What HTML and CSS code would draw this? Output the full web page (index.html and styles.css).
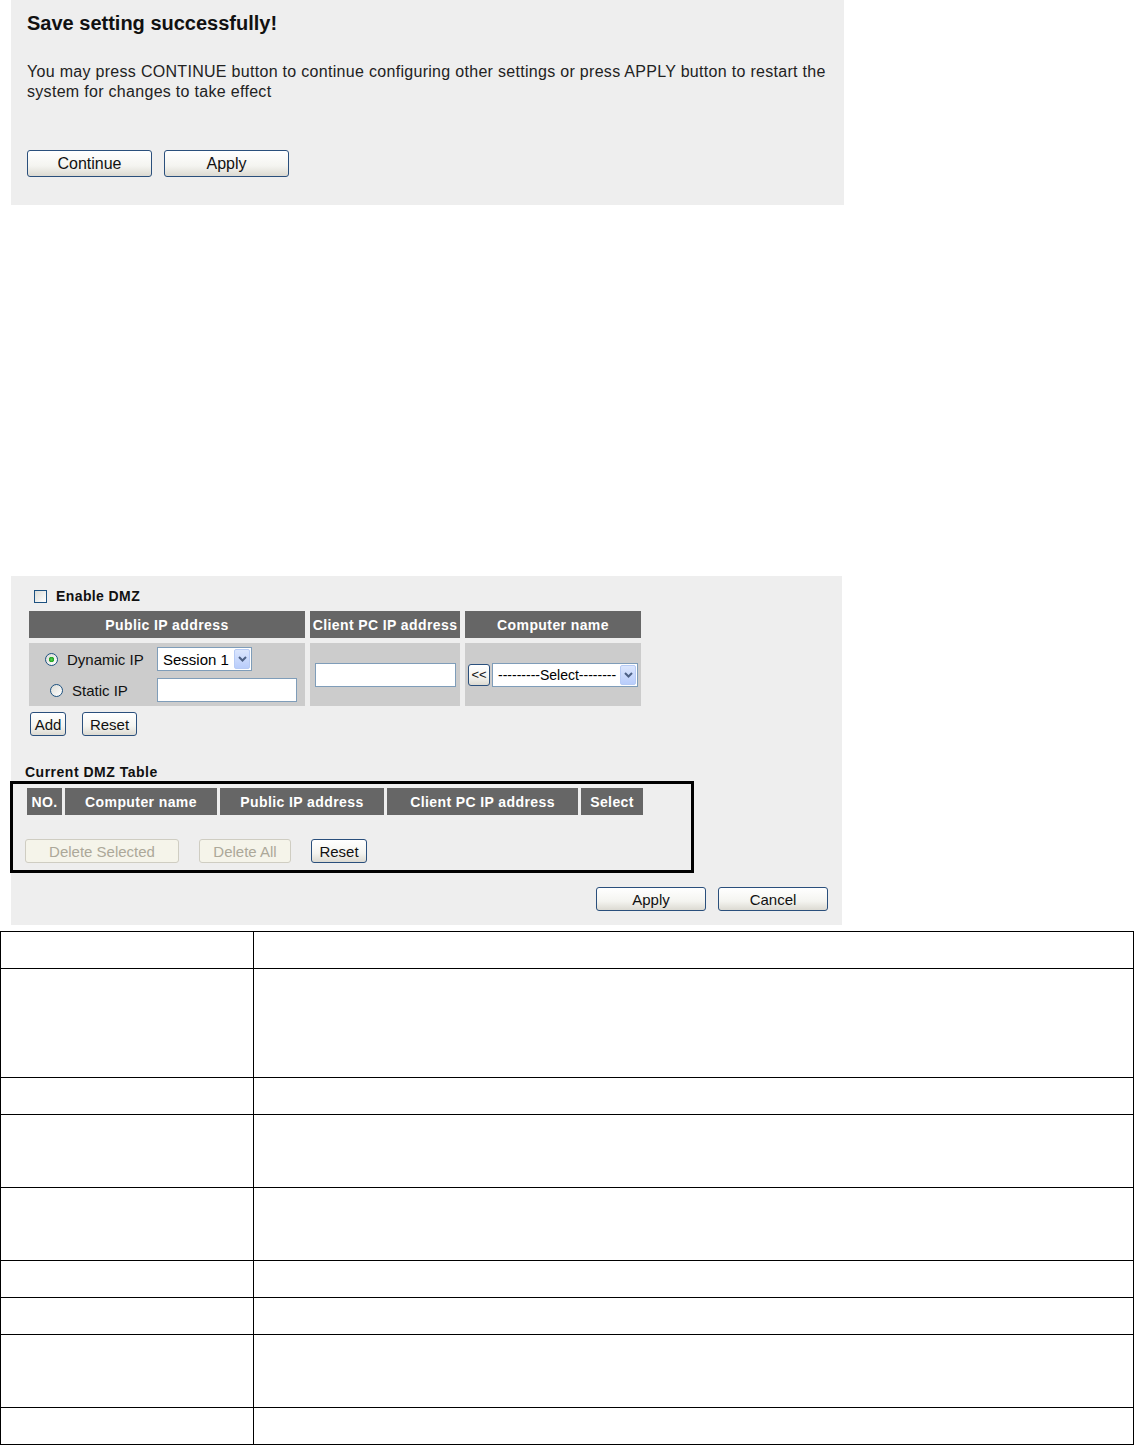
FILE: index.html
```html
<!DOCTYPE html>
<html lang="en">
  <head>
    <meta charset="UTF-8" />
    <meta name="viewport" content="width=device-width, initial-scale=1.0" />
    <title>DMZ Settings</title>
    <link rel="stylesheet" href="styles.css">
  </head>
  <body>
    <div class="panel save-panel">
      <h2 class="save-title">Save setting successfully!</h2>
      <p class="save-text">You may press CONTINUE button to continue configuring other settings or press APPLY button to restart the<br>system for changes to take effect</p>
      <div class="save-buttons">
        <button class="btn btn-big">Continue</button>
        <button class="btn btn-big">Apply</button>
      </div>
    </div>

    <div class="panel dmz-panel">
      <label class="enable-row"><input type="checkbox" class="checkbox">Enable DMZ</label>

      <div class="dmz-grid">
        <div class="head">Public IP address</div>
        <div class="head">Client PC IP address</div>
        <div class="head">Computer name</div>

        <div class="cell public-cell">
          <label class="radio-label"><input type="radio" name="iptype" class="radio" checked>Dynamic IP</label>
          <div class="select session-select">
            <span class="select-text">Session 1</span>
            <span class="select-arrow"><svg width="9" height="6" viewBox="0 0 9 6"><path d="M1 1 L4.5 4.5 L8 1" fill="none" stroke="#4d6185" stroke-width="2"/></svg></span>
          </div>
          <label class="radio-label radio-static"><input type="radio" name="iptype" class="radio">Static IP</label>
          <input type="text" class="text-input static-input">
        </div>

        <div class="cell client-cell">
          <input type="text" class="text-input client-input">
        </div>

        <div class="cell name-cell">
          <button class="btn btn-copy">&lt;&lt;</button>
          <div class="select name-select">
            <span class="select-text">---------Select--------</span>
            <span class="select-arrow"><svg width="9" height="6" viewBox="0 0 9 6"><path d="M1 1 L4.5 4.5 L8 1" fill="none" stroke="#4d6185" stroke-width="2"/></svg></span>
          </div>
        </div>
      </div>

      <div class="add-row">
        <button class="btn btn-small btn-add">Add</button>
        <button class="btn btn-small btn-reset">Reset</button>
      </div>

      <div class="table-label">Current DMZ Table</div>
      <div class="marked-box">
        <div class="current-grid">
          <div class="head">NO.</div>
          <div class="head">Computer name</div>
          <div class="head">Public IP address</div>
          <div class="head">Client PC IP address</div>
          <div class="head">Select</div>
        </div>
        <div class="delete-row">
          <button class="btn btn-small btn-wide" disabled>Delete Selected</button>
          <button class="btn btn-small btn-mid" disabled>Delete All</button>
          <button class="btn btn-small btn-reset2">Reset</button>
        </div>
      </div>

      <div class="apply-row">
        <button class="btn btn-small btn-apply">Apply</button>
        <button class="btn btn-small btn-apply">Cancel</button>
      </div>
    </div>

    <table class="desc-table">
      <tr class="row-s"><td class="col-name"></td><td></td></tr>
      <tr class="row-l"><td class="col-name"></td><td></td></tr>
      <tr class="row-s"><td class="col-name"></td><td></td></tr>
      <tr class="row-m"><td class="col-name"></td><td></td></tr>
      <tr class="row-m"><td class="col-name"></td><td></td></tr>
      <tr class="row-s"><td class="col-name"></td><td></td></tr>
      <tr class="row-s"><td class="col-name"></td><td></td></tr>
      <tr class="row-m"><td class="col-name"></td><td></td></tr>
      <tr class="row-s"><td class="col-name"></td><td></td></tr>
    </table>
  </body>
</html>
```

FILE: styles.css
```css
body {
  margin: 0;
  font-family: "Liberation Sans", Arial, sans-serif;
  color: #000;
  background-color: #fff;
}

.panel {
  background-color: #eeeeee;
  margin-left: 11px;
  box-sizing: border-box;
}

/* save message */

.save-panel {
  width: 833px;
  height: 205px;
  padding: 10px 0 0 16px;
}

.save-title {
  margin: 0;
  font-size: 20px;
  line-height: 26px;
  font-weight: bold;
  color: #111;
}

.save-text {
  margin: 26px 0 0;
  font-size: 16px;
  line-height: 20px;
  letter-spacing: 0.3px;
  color: #222;
}

.save-buttons {
  display: flex;
  gap: 12px;
  margin-top: 48px;
}

/* buttons */

.btn {
  font-family: "Liberation Sans", Arial, sans-serif;
  font-size: 15px;
  color: #111;
  padding: 0;
  border: 1px solid #2a4f7c;
  border-radius: 3px;
  background: linear-gradient(#ffffff, #f4f4f0 60%, #dcdad2);
  box-sizing: border-box;
}

.btn:disabled {
  color: #aca899;
  border-color: #cfcdc2;
  background: #f5f4ea;
}

.btn-big {
  width: 125px;
  height: 27px;
  font-size: 16px;
}

.btn-small {
  height: 24px;
}

.btn-add { width: 36px; }
.btn-reset { width: 55px; }
.btn-reset2 { width: 56px; }
.btn-wide { width: 154px; }
.btn-mid { width: 92px; }
.btn-apply { width: 110px; }

.btn-copy {
  width: 22px;
  height: 22px;
  font-size: 13px;
  line-height: 18px;
}

/* DMZ form */

.dmz-panel {
  width: 831px;
  margin-top: 371px;
  padding: 10px 0 14px;
}

.enable-row {
  display: flex;
  align-items: center;
  gap: 9px;
  height: 20px;
  margin-left: 23px;
  font-size: 14px;
  font-weight: bold;
  letter-spacing: 0.4px;
  color: #111;
}

.checkbox {
  appearance: none;
  margin: 0;
  width: 13px;
  height: 13px;
  border: 1px solid #1c5180;
  background: linear-gradient(135deg, #dcdcd6, #ffffff);
  box-sizing: border-box;
}

.dmz-grid {
  display: grid;
  grid-template-columns: 276px 150px 176px;
  grid-template-rows: 27px 63px;
  gap: 5px;
  margin: 5px 0 0 18px;
}

.head {
  background-color: #666666;
  color: #fff;
  font-size: 14px;
  font-weight: bold;
  letter-spacing: 0.4px;
  display: flex;
  align-items: center;
  justify-content: center;
  white-space: nowrap;
}

.cell {
  background-color: #cccccc;
}

.public-cell {
  display: grid;
  grid-template-columns: 128px 140px;
  grid-template-rows: 24px 24px;
  row-gap: 7px;
  padding-top: 4px;
  box-sizing: border-box;
}

.radio-label {
  display: flex;
  align-items: center;
  gap: 9px;
  padding-left: 16px;
  font-size: 15px;
  color: #111;
}

.radio-static {
  padding-left: 21px;
}

.radio {
  appearance: none;
  margin: 0;
  width: 13px;
  height: 13px;
  border: 1px solid #1c5180;
  border-radius: 50%;
  background: linear-gradient(135deg, #dcdcd6, #ffffff);
  box-sizing: border-box;
}

.radio:checked {
  background: radial-gradient(circle, #55d155 0, #21a121 2.5px, transparent 3px), linear-gradient(135deg, #dcdcd6, #ffffff);
}

.text-input {
  margin: 0;
  padding: 0 4px;
  height: 24px;
  border: 1px solid #7f9db9;
  background-color: #fff;
  box-sizing: border-box;
  font-family: "Liberation Sans", Arial, sans-serif;
  font-size: 15px;
}

.static-input { width: 140px; }

.client-cell {
  display: flex;
  align-items: center;
  justify-content: center;
}

.client-input { width: 141px; }

.name-cell {
  display: flex;
  align-items: center;
  gap: 2px;
  padding-left: 3px;
}

.select {
  display: flex;
  align-items: center;
  height: 24px;
  border: 1px solid #7f9db9;
  background-color: #fff;
  box-sizing: border-box;
  padding: 1px;
}

.select-text {
  flex: 1;
  padding-left: 4px;
  font-size: 15px;
  white-space: nowrap;
  overflow: hidden;
}

.select-arrow {
  width: 16px;
  height: 20px;
  display: flex;
  align-items: center;
  justify-content: center;
  border: 1px solid #b7cbf5;
  border-radius: 2px;
  background: linear-gradient(#dbe6fd, #b9cdfb);
  box-sizing: border-box;
}

.session-select { width: 95px; }

.name-select { width: 146px; }

.name-select .select-text { font-size: 14px; }

.add-row {
  display: flex;
  gap: 16px;
  margin: 6px 0 0 19px;
}

/* current table */

.table-label {
  margin: 28px 0 0 14px;
  font-size: 14px;
  line-height: 17px;
  font-weight: bold;
  letter-spacing: 0.5px;
  color: #111;
}

.marked-box {
  margin-left: -1px;
  width: 684px;
  height: 92px;
  border: 3px solid #000;
  box-sizing: border-box;
  padding: 4px 0 0 12px;
}

.current-grid {
  display: grid;
  grid-template-columns: 35px 152px 164px 191px 62px;
  grid-template-rows: 27px;
  gap: 3px;
  margin-left: 2px;
}

.delete-row {
  display: flex;
  gap: 20px;
  margin-top: 24px;
}

.apply-row {
  display: flex;
  justify-content: flex-end;
  gap: 12px;
  margin-top: 14px;
  padding-right: 14px;
}

/* description table */

.desc-table {
  width: 1134px;
  margin-top: 6px;
  border-collapse: collapse;
}

.desc-table td {
  border: 1px solid #000;
  padding: 0;
}

.desc-table .col-name {
  width: 252px;
}

.row-s { height: 37px; }
.row-m { height: 73px; }
.row-l { height: 109px; }
```
